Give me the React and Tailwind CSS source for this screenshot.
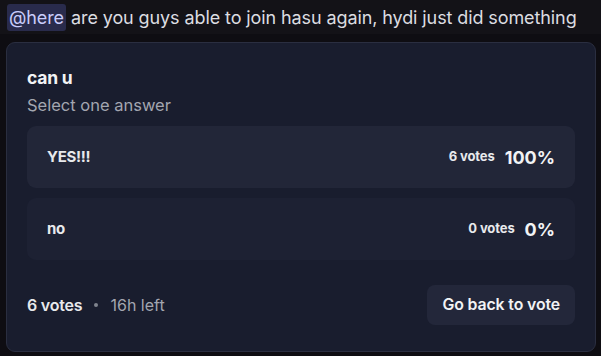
import React from 'react';

const options = [
  { label: 'YES!!!', votes: 6, pct: '100%', bg: 'bg-[#222638]' },
  { label: 'no', votes: 0, pct: '0%', bg: 'bg-[#1d2133]' },
];

const App = () => {
  return (
    <div
      className="w-[601px] h-[356px] bg-[#0e0d12] overflow-hidden"
      style={{ fontFamily: 'Inter, "Noto Sans", sans-serif' }}
    >
      {/* Message line */}
      <div className="h-[34px] bg-[#131217] flex items-center pl-[7px] text-[18px] tracking-[-0.1px] text-[#dcdde1] whitespace-nowrap">
        <span className="bg-[#292b4c] text-[#c9cdfb] rounded-[3px] px-[2px] mr-[5px]">@here</span>
        <span>are you guys able to join hasu again, hydi just did something</span>
      </div>

      {/* Poll card */}
      <div className="ml-[6px] mt-[8px] w-[590px] rounded-[9px] border border-[#2a2e40] bg-[#191d2e] px-[20px] pt-[23px] pb-[26px]">
        <div className="text-[17.5px] leading-[24px] font-bold tracking-[-0.2px] text-[#f2f3f5]">can u</div>
        <div className="mt-[5px] text-[16.5px] leading-[20px] text-[#a3a6b0]">Select one answer</div>

        <div className="mt-[11px] flex flex-col gap-[10px]">
          {options.map((o) => (
            <div
              key={o.label}
              className={`h-[62px] rounded-[9px] ${o.bg} flex items-center justify-between pl-[20px] pr-[20px]`}
            >
              <span className="text-[15px] font-bold tracking-[-0.3px] text-[#e8e9ec]">{o.label}</span>
              <div className="flex items-center gap-[10px]">
                <span className="text-[13px] font-bold tracking-[-0.1px] text-[#e8e9ec]">{o.votes} votes</span>
                <span className="text-[18px] font-bold text-[#f2f3f5]">{o.pct}</span>
              </div>
            </div>
          ))}
        </div>

        <div className="mt-[25px] flex items-center justify-between">
          <div className="flex items-center text-[16px]">
            <span className="font-semibold tracking-[-0.2px] text-[#e8e9ec]">6 votes</span>
            <span className="mx-[12px] w-[4px] h-[4px] rounded-full bg-[#80848e]"></span>
            <span className="text-[#a3a6b0]">16h left</span>
          </div>
          <button className="h-[40px] px-[15px] rounded-[8px] bg-[#23273a] text-[15.8px] font-semibold tracking-[-0.1px] text-[#f2f3f5]">
            Go back to vote
          </button>
        </div>
      </div>
    </div>
  );
};

export default App;
